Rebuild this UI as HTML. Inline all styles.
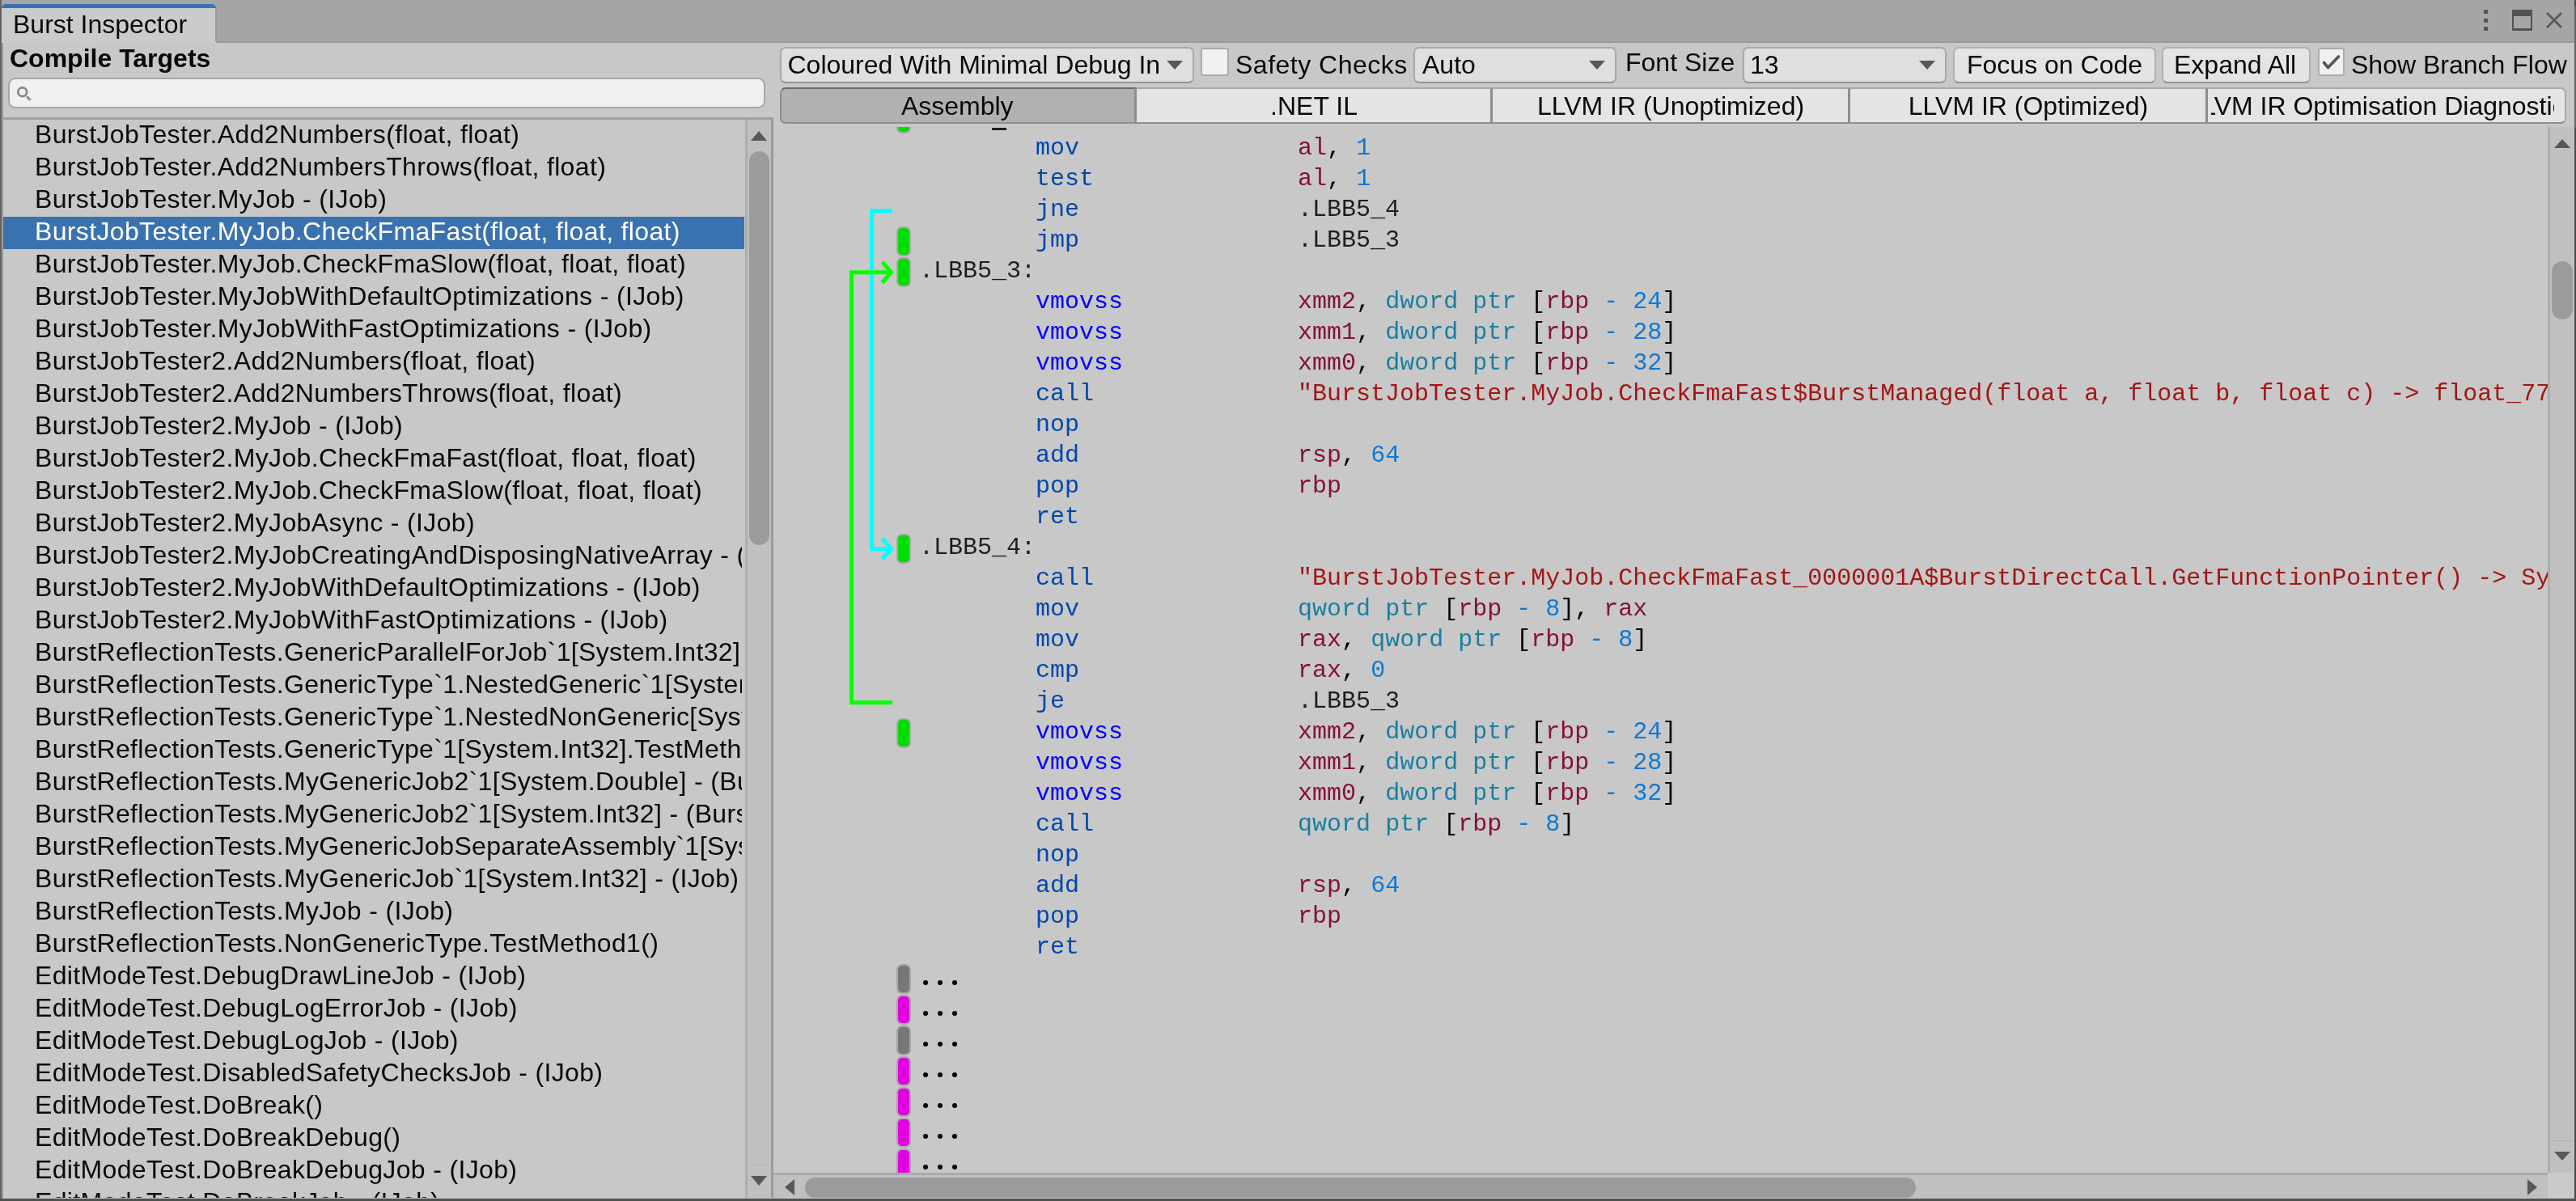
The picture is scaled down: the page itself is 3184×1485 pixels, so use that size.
<!DOCTYPE html><html><head><meta charset="utf-8"><title>Burst Inspector</title><style>
*{box-sizing:border-box;margin:0;padding:0}
html,body{width:3184px;height:1485px;overflow:hidden;background:#c8c8c8;font-family:"Liberation Sans", sans-serif;}
body{will-change:transform}
.a{position:absolute}
.t{position:absolute;font-family:"Liberation Sans", sans-serif;font-size:32px;line-height:36px;white-space:pre;color:#090909}
.m{position:absolute;font-family:"Liberation Mono", monospace;font-size:30px;line-height:38px;white-space:pre;color:#1e1e1e}
.ins{color:#0047ab} .simd{color:#0000ff} .reg{color:#85103c} .num{color:#0a78d6}
.qual{color:#1a7fa0} .str{color:#a31515} .pun{color:#000} .lbl{color:#1e1e1e}
.mk{position:absolute;left:1108px;width:17.5px;height:37px;border-radius:7px;border:2px solid #aca4ac}
.g{background:#00dd00} .p{background:#e000e0} .k{background:#777}
</style></head><body>
<div class="a" style="left:0px;top:0px;width:3184px;height:51px;background:#a5a5a5"></div>
<div class="a" style="left:267px;top:51px;width:2917px;height:2px;background:#999"></div>
<div class="a" style="left:0px;top:0px;width:2px;height:1485px;background:#636363"></div>
<div class="a" style="left:2px;top:53px;width:1.7px;height:1429px;background:#9c9c9c"></div>
<div class="a" style="left:3182px;top:0px;width:2px;height:1485px;background:#484a4d"></div>
<div class="a" style="left:3182px;top:8px;width:2px;height:150px;background:#5b6670"></div>
<div class="a" style="left:2px;top:5px;width:265px;height:48px;background:#cbcbcb;border-top-left-radius:5px;border-top-right-radius:5px;overflow:hidden"></div>
<div class="a" style="left:2px;top:5px;width:265px;height:5px;background:#3a72b0;border-top-left-radius:5px;border-top-right-radius:5px"></div>
<div class="a" style="left:266px;top:10px;width:2px;height:41px;background:#999"></div>
<div class="t" style="left:16px;top:11.5px;">Burst Inspector</div>
<div class="a" style="left:3070px;top:12px;width:5px;height:5px;background:#555"></div>
<div class="a" style="left:3070px;top:23px;width:5px;height:5px;background:#555"></div>
<div class="a" style="left:3070px;top:33px;width:5px;height:5px;background:#555"></div>
<div class="a" style="left:3105px;top:12px;width:25px;height:26px;border:2px solid #525252;border-top-width:8px;border-bottom-width:3px"></div>
<svg class="a" style="left:3145px;top:13px" width="24" height="24" viewBox="0 0 24 24"><path d="M3 3 L21 21 M21 3 L3 21" stroke="#585858" stroke-width="2.8" fill="none"/></svg>
<div class="t" style="left:12px;top:53.5px;font-weight:bold">Compile Targets</div>
<div class="a" style="left:10px;top:96px;width:936px;height:38px;background:#f0f0f0;border:2px solid #a6a6a6;border-radius:9px"></div>
<svg class="a" style="left:19px;top:105px" width="22" height="22" viewBox="0 0 22 22"><circle cx="8.7" cy="8.7" r="5.4" stroke="#8a8a8a" stroke-width="2.8" fill="none"/><path d="M14 14.2 L18.6 18.8" stroke="#8e8e8e" stroke-width="3" /></svg>
<div class="a" style="left:2px;top:145px;width:954px;height:3px;background:#9f9f9f"></div>
<div class="a" style="left:4px;top:268px;width:916px;height:40px;background:#3a72b0"></div>
<div class="a" style="left:4px;top:148px;width:913px;height:1333px;overflow:hidden">
<div class="t" style="left:39px;top:0px;color:#090909;letter-spacing:0.35px">BurstJobTester.Add2Numbers(float, float)</div>
<div class="t" style="left:39px;top:40px;color:#090909;letter-spacing:0.35px">BurstJobTester.Add2NumbersThrows(float, float)</div>
<div class="t" style="left:39px;top:80px;color:#090909;letter-spacing:0.35px">BurstJobTester.MyJob - (IJob)</div>
<div class="t" style="left:39px;top:120px;color:#fff;letter-spacing:0.35px">BurstJobTester.MyJob.CheckFmaFast(float, float, float)</div>
<div class="t" style="left:39px;top:160px;color:#090909;letter-spacing:0.35px">BurstJobTester.MyJob.CheckFmaSlow(float, float, float)</div>
<div class="t" style="left:39px;top:200px;color:#090909;letter-spacing:0.35px">BurstJobTester.MyJobWithDefaultOptimizations - (IJob)</div>
<div class="t" style="left:39px;top:240px;color:#090909;letter-spacing:0.35px">BurstJobTester.MyJobWithFastOptimizations - (IJob)</div>
<div class="t" style="left:39px;top:280px;color:#090909;letter-spacing:0.35px">BurstJobTester2.Add2Numbers(float, float)</div>
<div class="t" style="left:39px;top:320px;color:#090909;letter-spacing:0.35px">BurstJobTester2.Add2NumbersThrows(float, float)</div>
<div class="t" style="left:39px;top:360px;color:#090909;letter-spacing:0.35px">BurstJobTester2.MyJob - (IJob)</div>
<div class="t" style="left:39px;top:400px;color:#090909;letter-spacing:0.35px">BurstJobTester2.MyJob.CheckFmaFast(float, float, float)</div>
<div class="t" style="left:39px;top:440px;color:#090909;letter-spacing:0.35px">BurstJobTester2.MyJob.CheckFmaSlow(float, float, float)</div>
<div class="t" style="left:39px;top:480px;color:#090909;letter-spacing:0.35px">BurstJobTester2.MyJobAsync - (IJob)</div>
<div class="t" style="left:39px;top:520px;color:#090909;letter-spacing:0.35px">BurstJobTester2.MyJobCreatingAndDisposingNativeArray - (IJob)</div>
<div class="t" style="left:39px;top:560px;color:#090909;letter-spacing:0.35px">BurstJobTester2.MyJobWithDefaultOptimizations - (IJob)</div>
<div class="t" style="left:39px;top:600px;color:#090909;letter-spacing:0.35px">BurstJobTester2.MyJobWithFastOptimizations - (IJob)</div>
<div class="t" style="left:39px;top:640px;color:#090909;letter-spacing:0.35px">BurstReflectionTests.GenericParallelForJob`1[System.Int32] - (IJobParallelFor)</div>
<div class="t" style="left:39px;top:680px;color:#090909;letter-spacing:0.35px">BurstReflectionTests.GenericType`1.NestedGeneric`1[System.Int32,System.Single].TestMethod3()</div>
<div class="t" style="left:39px;top:720px;color:#090909;letter-spacing:0.35px">BurstReflectionTests.GenericType`1.NestedNonGeneric[System.Int32].TestMethod2()</div>
<div class="t" style="left:39px;top:760px;color:#090909;letter-spacing:0.35px">BurstReflectionTests.GenericType`1[System.Int32].TestMethod1()</div>
<div class="t" style="left:39px;top:800px;color:#090909;letter-spacing:0.35px">BurstReflectionTests.MyGenericJob2`1[System.Double] - (BurstReflectionTests.IMyGenericJob`1[System.Double])</div>
<div class="t" style="left:39px;top:840px;color:#090909;letter-spacing:0.35px">BurstReflectionTests.MyGenericJob2`1[System.Int32] - (BurstReflectionTests.IMyGenericJob`1[System.Int32])</div>
<div class="t" style="left:39px;top:880px;color:#090909;letter-spacing:0.35px">BurstReflectionTests.MyGenericJobSeparateAssembly`1[System.Int32] - (IJob)</div>
<div class="t" style="left:39px;top:920px;color:#090909;letter-spacing:0.35px">BurstReflectionTests.MyGenericJob`1[System.Int32] - (IJob)</div>
<div class="t" style="left:39px;top:960px;color:#090909;letter-spacing:0.35px">BurstReflectionTests.MyJob - (IJob)</div>
<div class="t" style="left:39px;top:1000px;color:#090909;letter-spacing:0.35px">BurstReflectionTests.NonGenericType.TestMethod1()</div>
<div class="t" style="left:39px;top:1040px;color:#090909;letter-spacing:0.35px">EditModeTest.DebugDrawLineJob - (IJob)</div>
<div class="t" style="left:39px;top:1080px;color:#090909;letter-spacing:0.35px">EditModeTest.DebugLogErrorJob - (IJob)</div>
<div class="t" style="left:39px;top:1120px;color:#090909;letter-spacing:0.35px">EditModeTest.DebugLogJob - (IJob)</div>
<div class="t" style="left:39px;top:1160px;color:#090909;letter-spacing:0.35px">EditModeTest.DisabledSafetyChecksJob - (IJob)</div>
<div class="t" style="left:39px;top:1200px;color:#090909;letter-spacing:0.35px">EditModeTest.DoBreak()</div>
<div class="t" style="left:39px;top:1240px;color:#090909;letter-spacing:0.35px">EditModeTest.DoBreakDebug()</div>
<div class="t" style="left:39px;top:1280px;color:#090909;letter-spacing:0.35px">EditModeTest.DoBreakDebugJob - (IJob)</div>
<div class="t" style="left:39px;top:1320px;color:#090909;letter-spacing:0.35px">EditModeTest.DoBreakJob - (IJob)</div>
</div>
<div class="a" style="left:921px;top:148px;width:3px;height:1333px;background:#adadad"></div>
<div class="a" style="left:924px;top:148px;width:29px;height:1333px;background:#c0c0c0"></div>
<div class="a" style="left:953px;top:148px;width:3px;height:1333px;background:#9a9a9a"></div>
<div class="a" style="left:926px;top:187px;width:25px;height:487px;background:#9b9b9b;border-radius:12.5px"></div>
<svg class="a" style="left:927px;top:161px" width="22" height="14" viewBox="0 0 22 14"><path d="M1 13 L11 1 L21 13 Z" fill="#555a55"/></svg>
<svg class="a" style="left:927px;top:1453px" width="22" height="14" viewBox="0 0 22 14"><path d="M1 1 L11 13 L21 1 Z" fill="#555a55"/></svg>
<div class="a" style="left:924px;top:1440px;width:29px;height:1px;background:#b3b3b3"></div>
<div class="a" style="left:0px;top:1482px;width:3184px;height:2.5px;background:#525252"></div>
<div class="a" style="left:0px;top:1484.5px;width:3184px;height:0.5px;background:#999"></div>

<div class="a" style="left:964px;top:58px;width:512px;height:45px;background:#dfdfdf;border:2px solid #a8a8a8;border-bottom-color:#939393;border-radius:7px"></div>
<div class="t" style="left:973.5px;top:62px;">Coloured With Minimal Debug In</div>
<svg class="a" style="left:1441px;top:74px" width="22" height="13" viewBox="0 0 22 13"><path d="M1 1 L11 12 L21 1 Z" fill="#555a55"/></svg>
<div class="a" style="left:1484px;top:59px;width:35px;height:35px;background:#f0f0f0;border:2px solid #ababab;border-radius:3px"></div>
<div class="t" style="left:1527px;top:62px;letter-spacing:0.5px">Safety Checks</div>
<div class="a" style="left:1747px;top:58px;width:251px;height:45px;background:#dfdfdf;border:2px solid #a8a8a8;border-bottom-color:#939393;border-radius:7px"></div>
<div class="t" style="left:1758px;top:62px;">Auto</div>
<svg class="a" style="left:1963px;top:74px" width="22" height="13" viewBox="0 0 22 13"><path d="M1 1 L11 12 L21 1 Z" fill="#555a55"/></svg>
<div class="t" style="left:2009px;top:59px;">Font Size</div>
<div class="a" style="left:2154px;top:58px;width:252px;height:45px;background:#dfdfdf;border:2px solid #a8a8a8;border-bottom-color:#939393;border-radius:7px"></div>
<div class="t" style="left:2163px;top:62px;">13</div>
<svg class="a" style="left:2371px;top:74px" width="22" height="13" viewBox="0 0 22 13"><path d="M1 1 L11 12 L21 1 Z" fill="#555a55"/></svg>
<div class="a" style="left:2414px;top:58px;width:251px;height:45px;background:#e4e4e4;border:2px solid #b0b0b0;border-bottom-color:#939393;border-radius:7px"></div>
<div class="t" style="left:2431px;top:62px;">Focus on Code</div>
<div class="a" style="left:2672px;top:58px;width:184px;height:45px;background:#e4e4e4;border:2px solid #b0b0b0;border-bottom-color:#939393;border-radius:7px"></div>
<div class="t" style="left:2687px;top:62px;">Expand All</div>
<div class="a" style="left:2865px;top:59px;width:33px;height:35px;background:#f0f0f0;border:2px solid #ababab;border-radius:3px"></div>
<svg class="a" style="left:2867px;top:63px" width="30" height="28" viewBox="0 0 30 28"><path d="M5.5 14.5 L10.5 20.5 L23.5 7" stroke="#555" stroke-width="3.6" fill="none" stroke-linecap="round" stroke-linejoin="round"/></svg>
<div class="t" style="left:2906px;top:62px;">Show Branch Flow</div>
<div class="a" style="left:963.5px;top:108px;width:441.5px;height:45px;background:#b1b1b1;border:2px solid #8e8e8e;border-top-color:#6a6a6a;border-right:3px solid #8e8e8e;border-top-left-radius:7px;border-bottom-left-radius:7px"></div>
<div class="a" style="left:1405px;top:108px;width:440px;height:45px;background:#e4e4e4;border-top:2px solid #a8a8a8;border-bottom:2px solid #8e8e8e;border-right:3px solid #8e8e8e"></div>
<div class="a" style="left:1845px;top:108px;width:442px;height:45px;background:#e4e4e4;border-top:2px solid #a8a8a8;border-bottom:2px solid #8e8e8e;border-right:3px solid #8e8e8e"></div>
<div class="a" style="left:2287px;top:108px;width:442px;height:45px;background:#e4e4e4;border-top:2px solid #a8a8a8;border-bottom:2px solid #8e8e8e;border-right:3px solid #8e8e8e"></div>
<div class="a" style="left:2729px;top:108px;width:443px;height:45px;background:#e4e4e4;border:2px solid #a8a8a8;border-left:0;border-bottom-color:#8e8e8e;border-top-right-radius:7px;border-bottom-right-radius:7px"></div>
<div class="a" style="left:967.5px;top:110px;width:431.5px;height:41px;overflow:hidden"><div class="t" style="position:absolute;left:0;right:0;top:3px;text-align:center;display:flex;justify-content:center">Assembly</div></div>
<div class="a" style="left:1409px;top:110px;width:430px;height:41px;overflow:hidden"><div class="t" style="position:absolute;left:0;right:0;top:3px;text-align:center;display:flex;justify-content:center">.NET IL</div></div>
<div class="a" style="left:1849px;top:110px;width:432px;height:41px;overflow:hidden"><div class="t" style="position:absolute;left:0;right:0;top:3px;text-align:center;display:flex;justify-content:center">LLVM IR (Unoptimized)</div></div>
<div class="a" style="left:2291px;top:110px;width:432px;height:41px;overflow:hidden"><div class="t" style="position:absolute;left:0;right:0;top:3px;text-align:center;display:flex;justify-content:center">LLVM IR (Optimized)</div></div>
<div class="a" style="left:2733px;top:110px;width:424px;height:41px;overflow:hidden"><div class="t" style="position:absolute;left:0;right:0;top:3px;text-align:center;display:flex;justify-content:center">LLVM IR Optimisation Diagnostics</div></div>
<div class="a" style="left:956px;top:157px;width:2193px;height:1293px;overflow:hidden">
<div class="m" style="left:180px;top:-31.0px"><span class="lbl">.LBB5_2:</span></div>
<div class="m" style="left:180px;top:7.0px">        <span class="ins">mov</span>               <span class="reg">al</span><span class="pun">,</span> <span class="num">1</span></div>
<div class="m" style="left:180px;top:45.0px">        <span class="ins">test</span>              <span class="reg">al</span><span class="pun">,</span> <span class="num">1</span></div>
<div class="m" style="left:180px;top:83.0px">        <span class="ins">jne</span>               <span class="lbl">.LBB5_4</span></div>
<div class="m" style="left:180px;top:121.0px">        <span class="ins">jmp</span>               <span class="lbl">.LBB5_3</span></div>
<div class="m" style="left:180px;top:159.0px"><span class="lbl">.LBB5_3:</span></div>
<div class="m" style="left:180px;top:197.0px">        <span class="simd">vmovss</span>            <span class="reg">xmm2</span><span class="pun">,</span> <span class="qual">dword</span> <span class="qual">ptr</span> <span class="pun">[</span><span class="reg">rbp</span> <span class="num">-</span> <span class="num">24</span><span class="pun">]</span></div>
<div class="m" style="left:180px;top:235.0px">        <span class="simd">vmovss</span>            <span class="reg">xmm1</span><span class="pun">,</span> <span class="qual">dword</span> <span class="qual">ptr</span> <span class="pun">[</span><span class="reg">rbp</span> <span class="num">-</span> <span class="num">28</span><span class="pun">]</span></div>
<div class="m" style="left:180px;top:273.0px">        <span class="simd">vmovss</span>            <span class="reg">xmm0</span><span class="pun">,</span> <span class="qual">dword</span> <span class="qual">ptr</span> <span class="pun">[</span><span class="reg">rbp</span> <span class="num">-</span> <span class="num">32</span><span class="pun">]</span></div>
<div class="m" style="left:180px;top:311.0px">        <span class="ins">call</span>              <span class="str">&quot;BurstJobTester.MyJob.CheckFmaFast$BurstManaged(float a, float b, float c) -&gt; float_7777777777&quot;</span></div>
<div class="m" style="left:180px;top:349.0px">        <span class="ins">nop</span>               </div>
<div class="m" style="left:180px;top:387.0px">        <span class="ins">add</span>               <span class="reg">rsp</span><span class="pun">,</span> <span class="num">64</span></div>
<div class="m" style="left:180px;top:425.0px">        <span class="ins">pop</span>               <span class="reg">rbp</span></div>
<div class="m" style="left:180px;top:463.0px">        <span class="ins">ret</span>               </div>
<div class="m" style="left:180px;top:501.0px"><span class="lbl">.LBB5_4:</span></div>
<div class="m" style="left:180px;top:539.0px">        <span class="ins">call</span>              <span class="str">&quot;BurstJobTester.MyJob.CheckFmaFast_0000001A$BurstDirectCall.GetFunctionPointer() -&gt; System.IntPtr&quot;</span></div>
<div class="m" style="left:180px;top:577.0px">        <span class="ins">mov</span>               <span class="qual">qword</span> <span class="qual">ptr</span> <span class="pun">[</span><span class="reg">rbp</span> <span class="num">-</span> <span class="num">8</span><span class="pun">]</span><span class="pun">,</span> <span class="reg">rax</span></div>
<div class="m" style="left:180px;top:615.0px">        <span class="ins">mov</span>               <span class="reg">rax</span><span class="pun">,</span> <span class="qual">qword</span> <span class="qual">ptr</span> <span class="pun">[</span><span class="reg">rbp</span> <span class="num">-</span> <span class="num">8</span><span class="pun">]</span></div>
<div class="m" style="left:180px;top:653.0px">        <span class="ins">cmp</span>               <span class="reg">rax</span><span class="pun">,</span> <span class="num">0</span></div>
<div class="m" style="left:180px;top:691.0px">        <span class="ins">je</span>                <span class="lbl">.LBB5_3</span></div>
<div class="m" style="left:180px;top:729.0px">        <span class="simd">vmovss</span>            <span class="reg">xmm2</span><span class="pun">,</span> <span class="qual">dword</span> <span class="qual">ptr</span> <span class="pun">[</span><span class="reg">rbp</span> <span class="num">-</span> <span class="num">24</span><span class="pun">]</span></div>
<div class="m" style="left:180px;top:767.0px">        <span class="simd">vmovss</span>            <span class="reg">xmm1</span><span class="pun">,</span> <span class="qual">dword</span> <span class="qual">ptr</span> <span class="pun">[</span><span class="reg">rbp</span> <span class="num">-</span> <span class="num">28</span><span class="pun">]</span></div>
<div class="m" style="left:180px;top:805.0px">        <span class="simd">vmovss</span>            <span class="reg">xmm0</span><span class="pun">,</span> <span class="qual">dword</span> <span class="qual">ptr</span> <span class="pun">[</span><span class="reg">rbp</span> <span class="num">-</span> <span class="num">32</span><span class="pun">]</span></div>
<div class="m" style="left:180px;top:843.0px">        <span class="ins">call</span>              <span class="qual">qword</span> <span class="qual">ptr</span> <span class="pun">[</span><span class="reg">rbp</span> <span class="num">-</span> <span class="num">8</span><span class="pun">]</span></div>
<div class="m" style="left:180px;top:881.0px">        <span class="ins">nop</span>               </div>
<div class="m" style="left:180px;top:919.0px">        <span class="ins">add</span>               <span class="reg">rsp</span><span class="pun">,</span> <span class="num">64</span></div>
<div class="m" style="left:180px;top:957.0px">        <span class="ins">pop</span>               <span class="reg">rbp</span></div>
<div class="m" style="left:180px;top:995.0px">        <span class="ins">ret</span>               </div>
<div class="m" style="left:180px;top:1033.0px"><span class="lbl"></span></div>
<div class="m" style="left:180px;top:1071.0px"><span class="lbl"></span></div>
<div class="m" style="left:180px;top:1109.0px"><span class="lbl"></span></div>
<div class="m" style="left:180px;top:1147.0px"><span class="lbl"></span></div>
<div class="m" style="left:180px;top:1185.0px"><span class="lbl"></span></div>
<div class="m" style="left:180px;top:1223.0px"><span class="lbl"></span></div>
<div class="m" style="left:180px;top:1261.0px"><span class="lbl"></span></div>
<div class="mk g" style="left:152px;top:-28.8px"></div>
<div class="mk g" style="left:152px;top:123.2px"></div>
<div class="mk g" style="left:152px;top:161.2px"></div>
<div class="mk g" style="left:152px;top:503.2px"></div>
<div class="mk g" style="left:152px;top:731.2px"></div>
<div class="mk k" style="left:152px;top:1035.2px"></div>
<div class="mk p" style="left:152px;top:1073.2px"></div>
<div class="mk k" style="left:152px;top:1111.2px"></div>
<div class="mk p" style="left:152px;top:1149.2px"></div>
<div class="mk p" style="left:152px;top:1187.2px"></div>
<div class="mk p" style="left:152px;top:1225.2px"></div>
<div class="mk p" style="left:152px;top:1263.2px"></div>
<div class="a" style="left:185.1px;top:1055.1px;width:6.4px;height:6.4px;border-radius:50%;background:#000"></div>
<div class="a" style="left:203.1px;top:1055.1px;width:6.4px;height:6.4px;border-radius:50%;background:#000"></div>
<div class="a" style="left:221.1px;top:1055.1px;width:6.4px;height:6.4px;border-radius:50%;background:#000"></div>
<div class="a" style="left:185.1px;top:1093.1px;width:6.4px;height:6.4px;border-radius:50%;background:#000"></div>
<div class="a" style="left:203.1px;top:1093.1px;width:6.4px;height:6.4px;border-radius:50%;background:#000"></div>
<div class="a" style="left:221.1px;top:1093.1px;width:6.4px;height:6.4px;border-radius:50%;background:#000"></div>
<div class="a" style="left:185.1px;top:1131.1px;width:6.4px;height:6.4px;border-radius:50%;background:#000"></div>
<div class="a" style="left:203.1px;top:1131.1px;width:6.4px;height:6.4px;border-radius:50%;background:#000"></div>
<div class="a" style="left:221.1px;top:1131.1px;width:6.4px;height:6.4px;border-radius:50%;background:#000"></div>
<div class="a" style="left:185.1px;top:1169.1px;width:6.4px;height:6.4px;border-radius:50%;background:#000"></div>
<div class="a" style="left:203.1px;top:1169.1px;width:6.4px;height:6.4px;border-radius:50%;background:#000"></div>
<div class="a" style="left:221.1px;top:1169.1px;width:6.4px;height:6.4px;border-radius:50%;background:#000"></div>
<div class="a" style="left:185.1px;top:1207.1px;width:6.4px;height:6.4px;border-radius:50%;background:#000"></div>
<div class="a" style="left:203.1px;top:1207.1px;width:6.4px;height:6.4px;border-radius:50%;background:#000"></div>
<div class="a" style="left:221.1px;top:1207.1px;width:6.4px;height:6.4px;border-radius:50%;background:#000"></div>
<div class="a" style="left:185.1px;top:1245.1px;width:6.4px;height:6.4px;border-radius:50%;background:#000"></div>
<div class="a" style="left:203.1px;top:1245.1px;width:6.4px;height:6.4px;border-radius:50%;background:#000"></div>
<div class="a" style="left:221.1px;top:1245.1px;width:6.4px;height:6.4px;border-radius:50%;background:#000"></div>
<div class="a" style="left:185.1px;top:1283.1px;width:6.4px;height:6.4px;border-radius:50%;background:#000"></div>
<div class="a" style="left:203.1px;top:1283.1px;width:6.4px;height:6.4px;border-radius:50%;background:#000"></div>
<div class="a" style="left:221.1px;top:1283.1px;width:6.4px;height:6.4px;border-radius:50%;background:#000"></div>
<div class="a" style="left:270px;top:0.8px;width:18px;height:3.2px;background:#1e1e1e"></div>
<svg class="a" style="left:0;top:0" width="2193" height="1293" viewBox="0 0 2193 1293"><path d="M147 103.69999999999999 H121.5 V521.7 H145" stroke="#00ffff" stroke-width="5" fill="none"/><path d="M134.5 508.90000000000003 L145.5 521.7 L134.5 534.5" stroke="#00ffff" stroke-width="5" fill="none"/><path d="M147 711.7 H96.5 V179.7 H145" stroke="#00ff00" stroke-width="5" fill="none"/><path d="M134.5 166.89999999999998 L145.5 179.7 L134.5 192.5" stroke="#00ff00" stroke-width="5" fill="none"/></svg>
</div>
<div class="a" style="left:956px;top:1450px;width:2193px;height:3px;background:#ababab"></div>
<div class="a" style="left:956px;top:1453px;width:2193px;height:28px;background:#c0c0c0"></div>
<div class="a" style="left:995px;top:1456px;width:1373px;height:24.5px;background:#9b9b9b;border-radius:12.25px"></div>
<svg class="a" style="left:969px;top:1457px" width="14" height="22" viewBox="0 0 14 22"><path d="M13 1 L1 11 L13 21 Z" fill="#555a55"/></svg>
<svg class="a" style="left:3123px;top:1457px" width="14" height="22" viewBox="0 0 14 22"><path d="M1 1 L13 11 L1 21 Z" fill="#555a55"/></svg>
<div class="a" style="left:3149px;top:157px;width:3px;height:1293px;background:#adadad"></div>
<div class="a" style="left:3152px;top:157px;width:29px;height:1293px;background:#c0c0c0"></div>
<div class="a" style="left:3154px;top:323px;width:26px;height:72px;background:#9b9b9b;border-radius:13px"></div>
<svg class="a" style="left:3156px;top:171px" width="22" height="13" viewBox="0 0 22 13"><path d="M1 12 L11 1 L21 12 Z" fill="#555a55"/></svg>
<svg class="a" style="left:3156px;top:1423px" width="22" height="13" viewBox="0 0 22 13"><path d="M1 1 L11 12 L21 1 Z" fill="#555a55"/></svg>
<div class="a" style="left:3152px;top:1410px;width:29px;height:1px;background:#b3b3b3"></div>
<div class="a" style="left:3149px;top:1450px;width:32px;height:31px;background:#cacaca"></div>
</body></html>
